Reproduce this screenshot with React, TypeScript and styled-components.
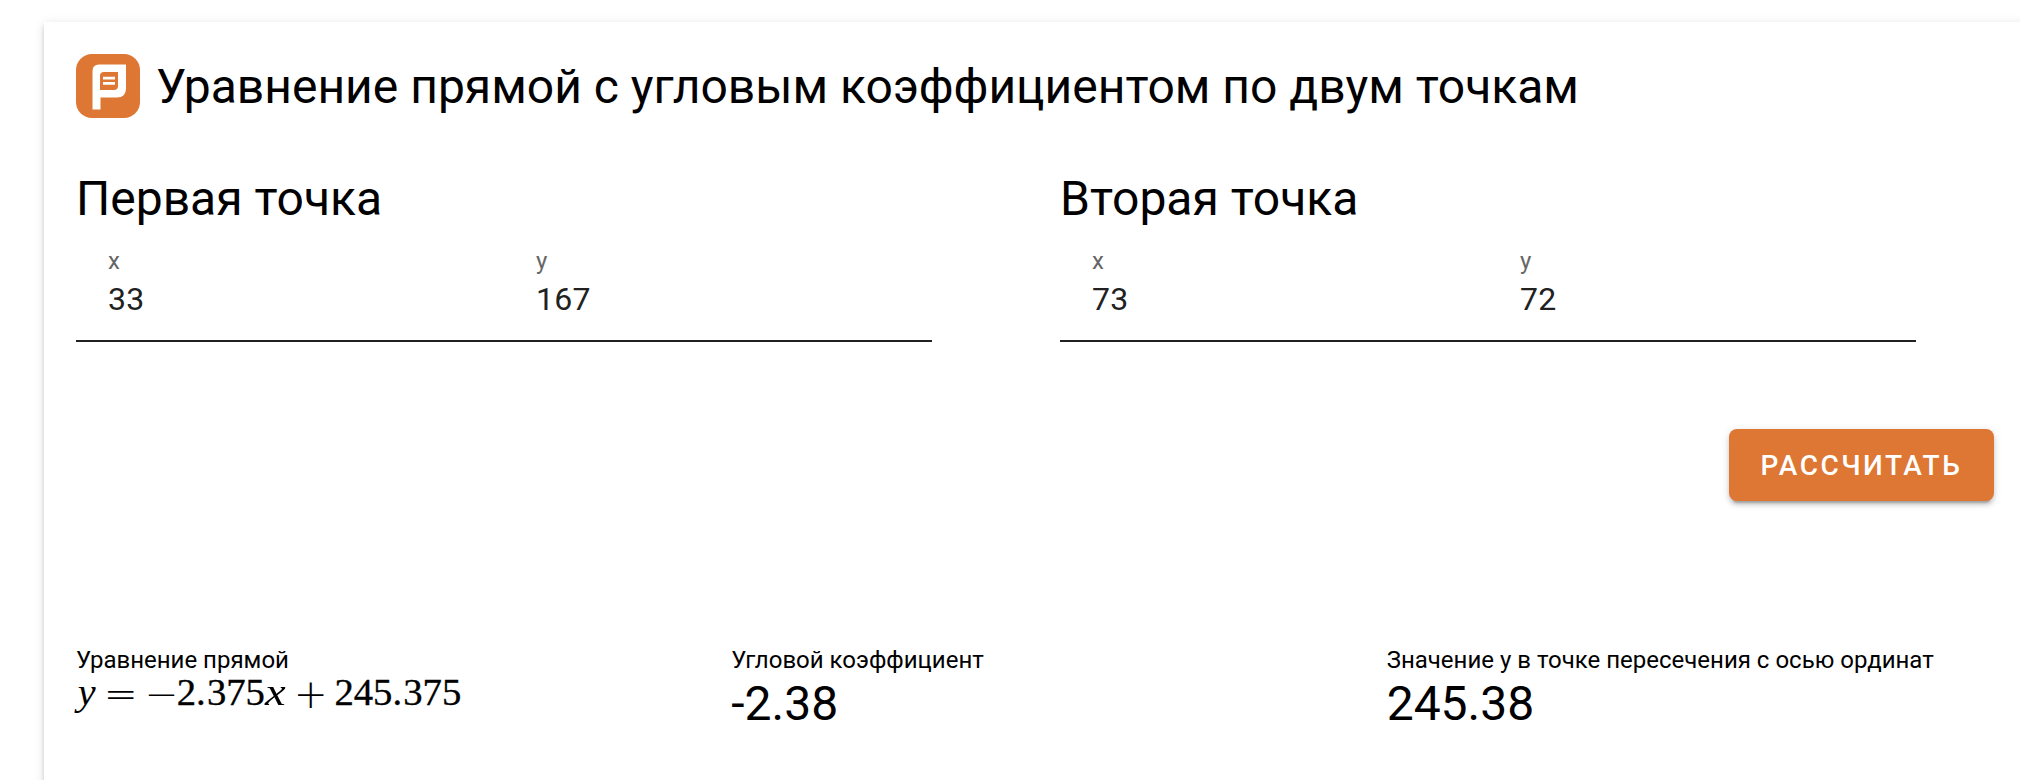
import React from "react";
import styled, { createGlobalStyle } from "styled-components";

const Global = createGlobalStyle`
  * { box-sizing: border-box; }
  body { margin: 0; background: #fff; font-family: Roboto, sans-serif; color: #000; overflow: hidden; }
  h1, h2, p { margin: 0; font-weight: 400; }
`;
const elevation = "0 6px 2px -4px rgba(0,0,0,.2), 0 4px 4px rgba(0,0,0,.14), 0 2px 10px rgba(0,0,0,.12)";
const accent = "#dd7733";

const Page = styled.main`padding: 22px 0 0 44px; height: 780px; overflow: hidden;`;
const Card = styled.section`
  width: 2010px; height: 800px; padding: 32px 0 0 32px;
  box-shadow: ${elevation};
`;
const Header = styled.header`display: flex; align-items: center; gap: 16px; height: 64px;`;
const Title = styled.h1`font-size: 48px; line-height: 62px; padding-top: 2px; white-space: nowrap;`;
const Points = styled.div`display: flex; gap: 128px; margin-top: 48px;`;
const Point = styled.div`width: 856px;`;
const Subtitle = styled.h2`font-size: 48px; line-height: 62px; padding-top: 2px;`;
const Fields = styled.div`display: flex; height: 112px; border-bottom: 2px solid #212121;`;
const Field = styled.label`width: 428px; padding: 16px 0 0 32px; display: flex; flex-direction: column;`;
const Label = styled.span`font-size: 24px; line-height: 30px; color: #666;`;
const Value = styled.span`font-size: 32px; line-height: 40px; letter-spacing: .3px; color: #212121; margin-top: 3px;`;
const Actions = styled.div`display: flex; margin: 87px 0 0 1653px;`;
const Button = styled.button`
  width: 265px; height: 72px; border: 0; border-radius: 8px; background: ${accent}; color: #fff;
  font: 500 28px/70px Roboto, sans-serif; letter-spacing: 2.5px; padding: 2px 0 0;
  box-shadow: ${elevation};
`;
const Results = styled.div`display: grid; grid-template-columns: repeat(3, 655.33px); margin-top: 144px;`;
const ResultLabel = styled.p`font-size: 24px; line-height: 30px; white-space: nowrap;`;
const Result = styled.p`font-size: 48px; line-height: 58px;`;
const Equation = styled.p`
  display: flex; align-items: baseline; height: 32px;
  font-family: "Liberation Serif", serif; font-size: 38.72px; line-height: 32px; white-space: nowrap;
`;
const Digits = styled.span`-webkit-text-stroke: .35px #000;`;
const Decimal = styled.span`margin-right: .028em;`;
const Variable = styled.i<{ $width: number; $stretch: number; $shift?: number }>`
  width: ${p => p.$width}em; transform: translateX(${p => p.$shift ?? 0}px) scaleX(${p => p.$stretch});
  transform-origin: 0 50%;
`;
const Operator = styled.span<{ $gap?: number }>`
  width: 30.1px; margin: 0 ${p => p.$gap ?? 0}px;
  font: 200 40.5px/32px "DejaVu Sans", sans-serif; display: flex; justify-content: center;
  transform: translateY(3px);
`;
const Mark = styled.g`filter: blur(.5px);`;

const Logo = () => (
  <svg width="64" height="64" viewBox="0 0 64 64">
    <rect width="64" height="64" rx="16" fill={accent} />
    <Mark>
      <path fill="#fff" fillRule="evenodd" d="M23 10.5H50V34.500Q50 43.500 41 43.500H24.500V55.500H16.500V17Q16.500 10.500 23 10.500ZM28 18Q24 18 24 22V36H38Q42 36 42 32V18Z" />
      <path stroke="#fff" strokeWidth="2.8" d="M27 24.2H39M27 29.3H39" />
    </Mark>
  </svg>
);

const PointForm = ({ title, x, y }: { title: string; x: string; y: string }) => (
  <Point>
    <Subtitle>{title}</Subtitle>
    <Fields>
      <Field><Label>x</Label><Value>{x}</Value></Field>
      <Field><Label>y</Label><Value>{y}</Value></Field>
    </Fields>
  </Point>
);

export default function App() {
  return (
    <Page>
      <Global />
      <Card>
        <Header><Logo /><Title>Уравнение прямой с угловым коэффициентом по двум точкам</Title></Header>
        <Points>
          <PointForm title="Первая точка" x="33" y="167" />
          <PointForm title="Вторая точка" x="73" y="72" />
        </Points>
        <Actions><Button>РАССЧИТАТЬ</Button></Actions>
        <Results>
          <div>
            <ResultLabel>Уравнение прямой</ResultLabel>
            <Equation>
              <Variable $width={0.49} $stretch={1.04} $shift={1.8}>y</Variable>
              <Operator $gap={10.8}>=</Operator>
              <Operator>−</Operator>
              <Digits>2<Decimal>.</Decimal>375</Digits>
              <Variable $width={0.572} $stretch={1.2}>x</Variable>
              <Operator $gap={8.6}>+</Operator>
              <Digits>245<Decimal>.</Decimal>375</Digits>
            </Equation>
          </div>
          <div><ResultLabel>Угловой коэффициент</ResultLabel><Result>-2.38</Result></div>
          <div><ResultLabel>Значение y в точке пересечения с осью ординат</ResultLabel><Result>245.38</Result></div>
        </Results>
      </Card>
    </Page>
  );
}
